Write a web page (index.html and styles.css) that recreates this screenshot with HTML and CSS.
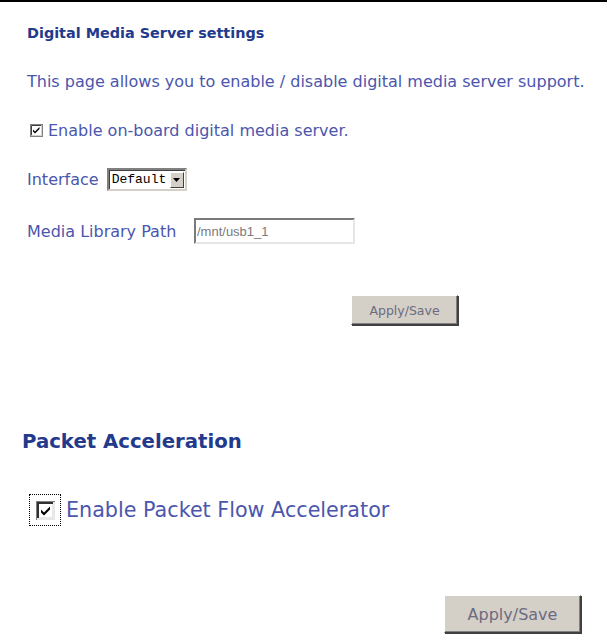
FILE: index.html
```html
<!DOCTYPE html>
<html lang="en">
<head>
    <meta charset="UTF-8">
    <title>Digital Media Server</title>
    <link rel="stylesheet" href="styles.css">
</head>
<body>
    <div class="page">
        <div class="title">Digital Media Server settings</div>
        <div class="desc">This page allows you to enable / disable digital media server support.</div>

        <label class="enable">
            <span class="chk">
                <svg width="13" height="13" viewBox="0 0 13 13">
                    <rect x="0.5" y="0.5" width="12" height="12" fill="#fff" stroke="#808080"/>
                    <path d="M1.5 11.5V1.5H11.5" fill="none" stroke="#404040"/>
                    <path d="M1.5 11.5H11.5V1.5" fill="none" stroke="#d4d0c8"/>
                    <path d="M3 5.5l2 2 4.5-4.5v2l-4.5 4.5-2-2z" fill="#000"/>
                </svg>
            </span>
            Enable on-board digital media server.
        </label>

        <div class="iface">
            <span>Interface</span>
            <span class="select">
                <span class="select-value">Default</span>
                <span class="select-arrow">
                    <svg width="7" height="4" viewBox="0 0 7 4"><path d="M0 0h7L3.5 4z" fill="#000"/></svg>
                </span>
            </span>
        </div>

        <div class="media">
            <span class="media-label">Media Library Path</span>
            <input class="path" type="text" value="/mnt/usb1_1">
        </div>

        <div class="actions first">
            <button class="btn">Apply/Save</button>
        </div>

        <div class="packet">Packet Acceleration</div>

        <label class="pfa">
            <span class="focus">
                <svg width="19" height="19" viewBox="0 0 19 19">
                    <rect x="0" y="0" width="19" height="19" fill="#e8e8e8"/>
                    <path d="M0 19V0H19" fill="none" stroke="#808080" stroke-width="2"/>
                    <path d="M2 17V2H17" fill="none" stroke="#303030" stroke-width="2"/>
                    <rect x="3" y="3" width="13" height="13" fill="#fff"/>
                    <path d="M5 8.5l3 3 6-6v3l-6 6-3-3z" fill="#000"/>
                </svg>
            </span>
            Enable Packet Flow Accelerator
        </label>

        <div class="actions second">
            <button class="btn big">Apply/Save</button>
        </div>
    </div>
</body>
</html>
```

FILE: styles.css
```css
body {
    margin: 0;
    padding: 0;
    background: #fff;
    font-family: "DejaVu Sans", "Noto Sans", sans-serif;
    color: #4b56ad;
}
.page {
    border-top: 2px solid #000;
    height: 638px;
    overflow: hidden;
}
.title {
    margin: 21px 0 0 27px;
    height: 20px;
    line-height: 20px;
    font-size: 14.4px;
    font-weight: bold;
    color: #23398c;
}
.desc {
    margin: 29px 0 0 27px;
    height: 20px;
    line-height: 20px;
    font-size: 16px;
}
.enable {
    display: flex;
    align-items: center;
    gap: 5px;
    margin: 28px 0 0 30px;
    height: 20px;
    font-size: 16px;
}
.chk svg {
    display: block;
}
.iface {
    display: flex;
    align-items: center;
    gap: 8px;
    margin: 27px 0 0 27px;
    height: 25px;
    font-size: 16px;
}
.select {
    display: flex;
    align-items: center;
    width: 76px;
    height: 19px;
    border: 2px solid;
    border-color: #808080 #d4d0c8 #d4d0c8 #808080;
    background: #fff;
    box-shadow: inset 1px 1px 0 #404040;
}
.select-value {
    flex: 1;
    padding-left: 3px;
    font-family: "Liberation Mono", "DejaVu Sans Mono", monospace;
    font-size: 13px;
    color: #000;
}
.select-arrow {
    display: flex;
    align-items: center;
    justify-content: center;
    width: 14px;
    height: 16px;
    margin-right: 1px;
    background: #d4d0c8;
    border: 1px solid;
    border-color: #fff #404040 #404040 #fff;
    box-sizing: border-box;
}
.media {
    display: flex;
    align-items: center;
    margin: 26px 0 0 27px;
    height: 26px;
    font-size: 16px;
}
.media-label {
    width: 167px;
}
.path {
    width: 161px;
    height: 26px;
    box-sizing: border-box;
    border: 2px solid;
    border-color: #7a7a7a #e6e6e6 #e6e6e6 #7a7a7a;
    padding: 0 1px;
    font-family: "Liberation Sans", Arial, sans-serif;
    font-size: 13px;
    color: #7a7a7a;
    outline: none;
}
.actions {
    display: flex;
}
.actions.first {
    margin: 51px 0 0 351px;
    height: 30px;
}
.actions.second {
    margin: 69px 0 0 444px;
    height: 38px;
}
.btn {
    width: 107px;
    height: 30px;
    background: #d4d0c8;
    border: 1px solid;
    border-color: #fff #404040 #404040 #fff;
    box-shadow: inset -1px -1px 0 #808080, 1px 1px 0 #404040;
    font-family: "DejaVu Sans", "Noto Sans", sans-serif;
    font-size: 12.5px;
    color: #6b6b80;
    padding: 0;
}
.btn.big {
    width: 137px;
    height: 38px;
    font-size: 16px;
}
.packet {
    margin: 105px 0 0 22px;
    height: 24px;
    line-height: 24px;
    font-size: 19.7px;
    font-weight: bold;
    color: #23398c;
}
.pfa {
    display: flex;
    align-items: center;
    gap: 5px;
    margin: 40px 0 0 29px;
    height: 32px;
    font-size: 20.7px;
}
.focus {
    display: flex;
    align-items: center;
    justify-content: center;
    width: 32px;
    height: 32px;
    box-sizing: border-box;
    border: 1px dotted #000;
}
.focus svg {
    display: block;
}
```
